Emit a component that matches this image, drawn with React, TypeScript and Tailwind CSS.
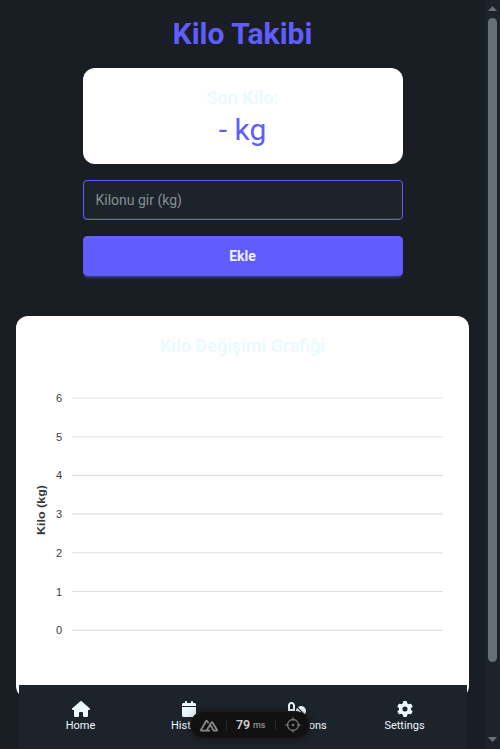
import React from "react";
import { FaCalendar, FaGear, FaHouse, FaPills } from "react-icons/fa6";

const ticks = [6, 5, 4, 3, 2, 1, 0];
const gridTop = 398;
const gridStep = 38.7;

function WeightChart() {
  return (
    <svg width="421" height="300" viewBox="32 370 421 300" className="block" aria-label="Kilo (kg)">
      {ticks.map((tick, i) => {
        const y = gridTop + i * gridStep;
        return (
          <g key={tick}>
            <line x1="72" x2="443" y1={y} y2={y} stroke={tick === 0 ? "#dcdcdc" : "#e0e0e0"} strokeWidth="1.1" />
            <text x="62" y={y + 4} textAnchor="end" fontSize="11" fill="#373d3f" fontFamily="'Liberation Sans', Arial, sans-serif">
              {tick}
            </text>
          </g>
        );
      })}
      <text
        transform="translate(45 510) rotate(-90)"
        textAnchor="middle"
        fontSize="11"
        fontWeight="700"
        fill="#373d3f"
        textLength="50"
        lengthAdjust="spacingAndGlyphs"
        fontFamily="'Liberation Sans', Arial, sans-serif"
      >
        Kilo (kg)
      </text>
    </svg>
  );
}

const navItems = [
  { label: "Home", Icon: FaHouse },
  { label: "History", Icon: FaCalendar },
  { label: "Medications", Icon: FaPills },
  { label: "Settings", Icon: FaGear },
];

function BottomNav() {
  return (
    <nav className="absolute bottom-0 left-[18.5px] flex h-16 w-[448px] bg-[#1d232a] px-2">
      {navItems.map(({ label, Icon }) => (
        <div key={label} className="flex flex-1 flex-col items-center pt-4">
          <Icon className="h-4 w-[18px]" />
          <span className="mt-px text-[11px] leading-4">{label}</span>
        </div>
      ))}
    </nav>
  );
}

function DevToolsPill() {
  return (
    <div className="absolute bottom-[10px] left-[190px] flex h-7 w-[120px] items-center rounded-full border border-[#1b1b1b] bg-[#111111] pl-[9px] shadow-[0_0_10px_rgba(0,0,0,0.3)]">
      <svg width="18" height="13" viewBox="0 0 18 13" fill="none" stroke="#888888" strokeWidth="1.8" strokeLinejoin="round">
        <path d="M10 11.7H1.6Q.6 11.7 1.1 10.7L6.1 2Q6.6 1.1 7.1 2L8.4 4.2" />
        <path d="M6.4 11.7L11.4 3.6Q12 2.8 12.5 3.6L16.9 10.7Q17.3 11.7 16.3 11.7H13.8L9.4 4.6" />
      </svg>
      <span className="ml-2 h-[10px] w-px bg-[#2a2a2a]" />
      <span className="ml-[9px] w-[14px] text-[12.5px] leading-4 font-semibold tracking-[-0.2px] text-[#cfcfcf]">79</span>
      <span className="ml-[3px] w-[13px] text-[9px] leading-4 font-medium text-[#909090]">ms</span>
      <span className="ml-[9px] h-[10px] w-px bg-[#2a2a2a]" />
      <svg className="ml-[9px]" width="16" height="16" viewBox="0 0 16 16" fill="none" stroke="#777777" strokeWidth="1.3">
        <circle cx="8" cy="8" r="5.5" />
        <path d="M8 .5v3M8 12.5v3M.5 8h3M12.5 8h3" />
        <circle cx="8" cy="8" r=".7" fill="#777777" />
      </svg>
    </div>
  );
}

function Scrollbar() {
  return (
    <div className="flex h-full w-[15px] shrink-0 flex-col items-center bg-[#1c232a]">
      <svg className="mt-[6px] shrink-0" width="9" height="5" viewBox="0 0 9 5" fill="#6a7178">
        <path d="M0 5L4.5 0L9 5Z" />
      </svg>
      <div className="mt-[7px] h-[644px] w-[9px] shrink-0 rounded-full bg-[#677077]" />
      <svg className="mt-auto mb-[7px] shrink-0" width="9" height="5" viewBox="0 0 9 5" fill="#6a7178">
        <path d="M0 0H9L4.5 5Z" />
      </svg>
    </div>
  );
}

export default function App() {
  return (
    <div className="relative flex h-[749px] w-[500px] overflow-hidden bg-[#191e24] font-['Roboto',sans-serif] text-[#ecf9ff]">
      <main className="flex h-full w-[485px] shrink-0 flex-col items-center overflow-hidden px-4 pt-4">
        <h1 className="mb-4 text-[30px] leading-9 font-bold text-[#605dff]">Kilo Takibi</h1>
        <section className="mb-4 flex h-24 w-80 shrink-0 flex-col items-center rounded-xl bg-white pt-4">
          <h2 className="text-[18px] leading-7 font-bold">Son Kilo:</h2>
          <p className="text-[30px] leading-9 text-[#605dff]">- kg</p>
        </section>
        <input
          type="text"
          placeholder="Kilonu gir (kg)"
          className="mb-4 h-10 w-80 shrink-0 rounded border border-[#605dff] bg-[#1d232a] px-3 text-sm shadow-[inset_0_-1px_rgba(255,255,255,0.1)] placeholder:text-[#868f96]"
        />
        <button className="mb-10 h-10 w-80 shrink-0 rounded border border-[#5b58f2] bg-[#605dff] text-sm font-bold text-[#edf1fe] shadow-[inset_0_1px_rgba(255,255,255,0.08),0_3px_2px_-2px_rgba(96,93,255,0.3),0_4px_3px_-2px_rgba(96,93,255,0.3)]">
          Ekle
        </button>
        <section className="flex h-[382px] w-[453px] shrink-0 flex-col items-center rounded-xl bg-white pt-4">
          <h2 className="mb-[10px] text-[18px] leading-7 font-bold">Kilo Değişimi Grafiği</h2>
          <WeightChart />
        </section>
      </main>
      <Scrollbar />
      <BottomNav />
      <DevToolsPill />
    </div>
  );
}
